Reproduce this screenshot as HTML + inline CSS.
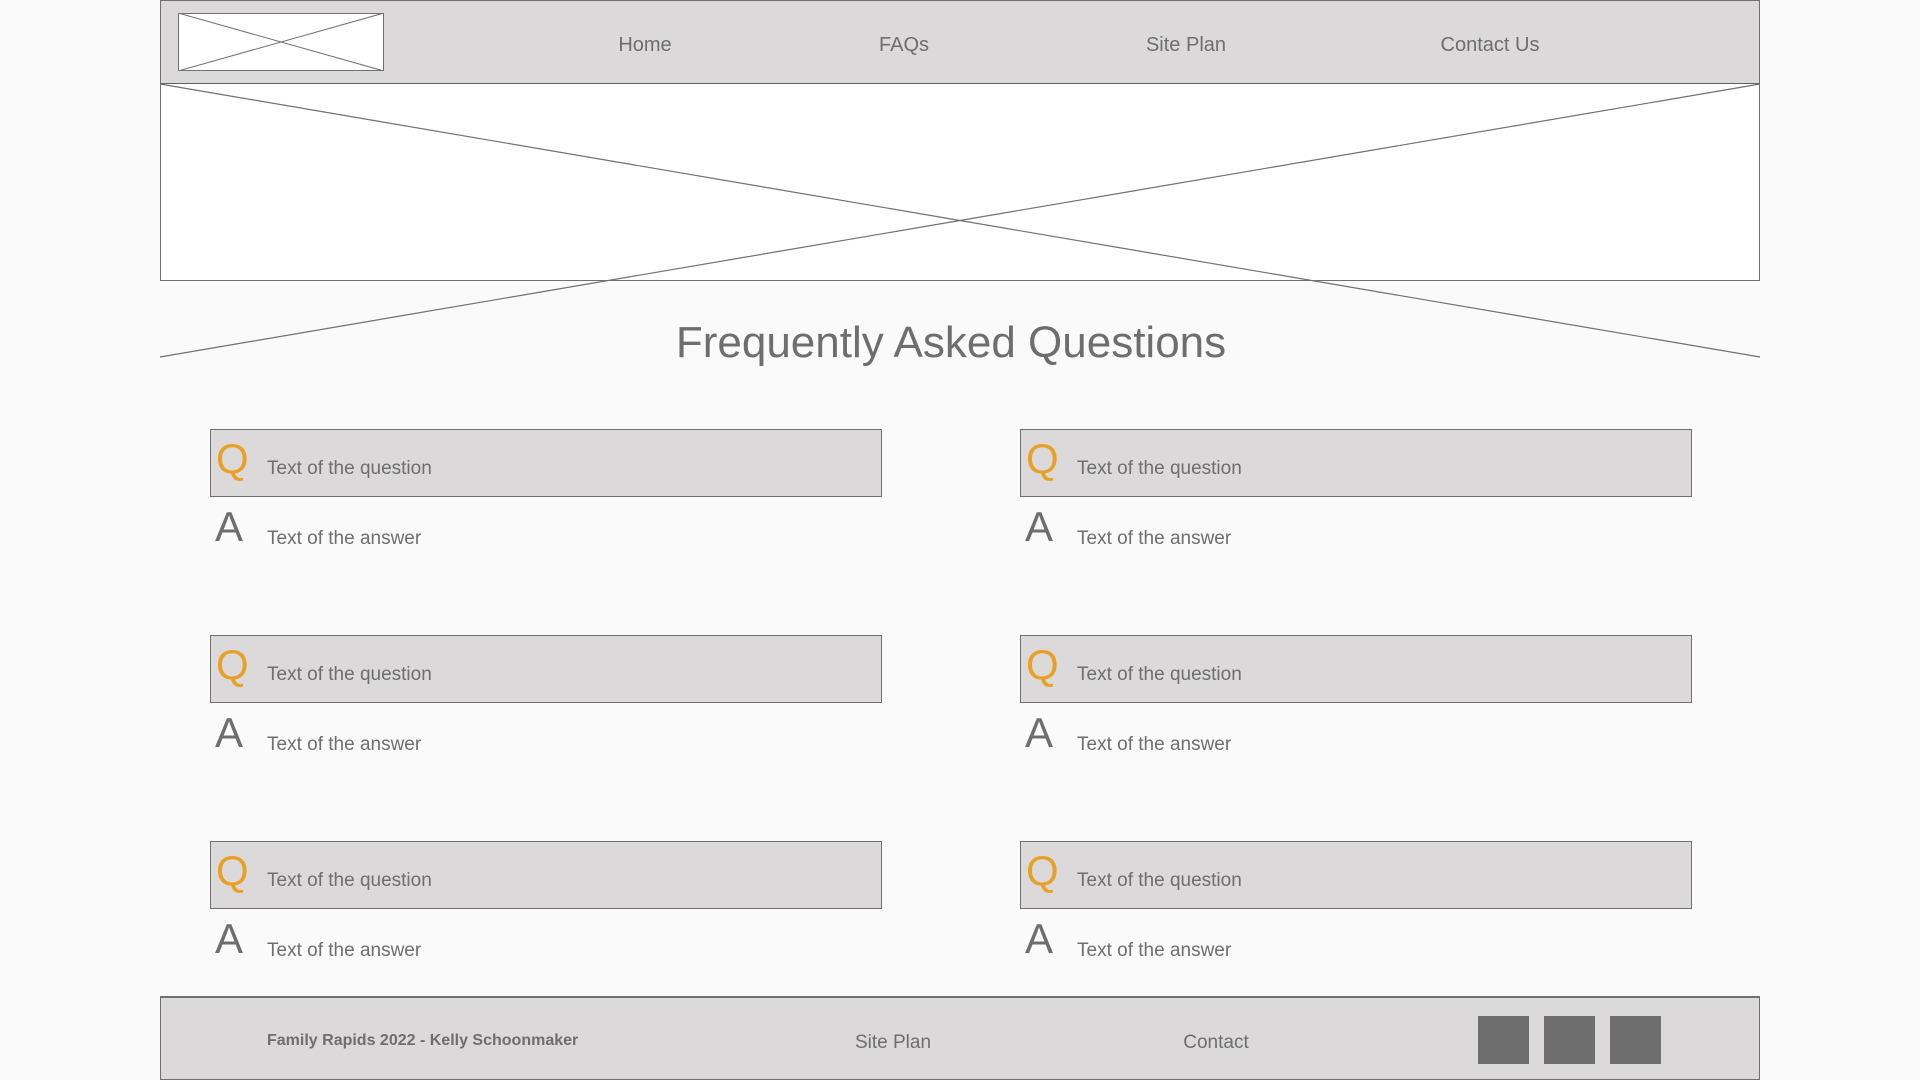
<!DOCTYPE html>
<html><head><style>
*{margin:0;padding:0;box-sizing:border-box}
body{width:1920px;height:1080px;background:#fafafa;position:relative;overflow:hidden;font-family:"Segoe UI","Liberation Sans",sans-serif;color:#6e6e6e}
.abs{position:absolute}
.hdr{left:160px;top:0;width:1600px;height:85px;background:#dbd9da;border:1px solid #707070;border-bottom:2px solid #606060}
.nav{top:34px;font-size:20px;transform:translateX(-50%);white-space:nowrap}
.qb{width:672px;height:68px;background:#dbd9da;border:1px solid #707070}
.q{font-size:42px;color:#e8a025;line-height:1}
.a{font-size:42px;color:#6e6e6e;line-height:1}
.t{font-size:19px}
.ftr{left:160px;top:996px;width:1600px;height:84px;background:#dbd9da;border:1px solid #707070;border-top:2px solid #707070}
.sq{width:51px;height:48px;background:#6e6e6e;top:1016px}
</style></head><body>
<div class="abs hdr"></div>
<svg class="abs" style="left:178px;top:13px" width="206" height="58"><rect x="0.5" y="0.5" width="205" height="57" fill="#fff" stroke="#707070"/><line x1="0" y1="0" x2="206" y2="58" stroke="#707070"/><line x1="206" y1="0" x2="0" y2="58" stroke="#707070"/></svg>
<div class="abs nav" style="left:645px">Home</div>
<div class="abs nav" style="left:904px">FAQs</div>
<div class="abs nav" style="left:1186px">Site Plan</div>
<div class="abs nav" style="left:1490px">Contact Us</div>
<div class="abs" style="left:160px;top:84px;width:1600px;height:197px;background:#fff;border:1px solid #707070;border-top:none"></div>
<svg class="abs" style="left:0;top:0" width="1920" height="400"><line x1="160" y1="84" x2="1760" y2="357" stroke="#707070" stroke-width="1.2"/><line x1="1760" y1="84" x2="160" y2="357" stroke="#707070" stroke-width="1.2"/></svg>
<div class="abs" style="left:0;width:1902px;text-align:center;top:318px;font-size:44px;color:#6e6e6e">Frequently Asked Questions</div>

<div class="abs qb" style="left:210px;top:429px"></div>
<div class="abs q" style="left:216px;top:438px">Q</div>
<div class="abs t" style="left:267px;top:458px">Text of the question</div>
<div class="abs a" style="left:215px;top:506px">A</div>
<div class="abs t" style="left:267px;top:528px">Text of the answer</div>

<div class="abs qb" style="left:1020px;top:429px"></div>
<div class="abs q" style="left:1026px;top:438px">Q</div>
<div class="abs t" style="left:1077px;top:458px">Text of the question</div>
<div class="abs a" style="left:1025px;top:506px">A</div>
<div class="abs t" style="left:1077px;top:528px">Text of the answer</div>

<div class="abs qb" style="left:210px;top:635px"></div>
<div class="abs q" style="left:216px;top:644px">Q</div>
<div class="abs t" style="left:267px;top:664px">Text of the question</div>
<div class="abs a" style="left:215px;top:712px">A</div>
<div class="abs t" style="left:267px;top:734px">Text of the answer</div>

<div class="abs qb" style="left:1020px;top:635px"></div>
<div class="abs q" style="left:1026px;top:644px">Q</div>
<div class="abs t" style="left:1077px;top:664px">Text of the question</div>
<div class="abs a" style="left:1025px;top:712px">A</div>
<div class="abs t" style="left:1077px;top:734px">Text of the answer</div>

<div class="abs qb" style="left:210px;top:841px"></div>
<div class="abs q" style="left:216px;top:850px">Q</div>
<div class="abs t" style="left:267px;top:870px">Text of the question</div>
<div class="abs a" style="left:215px;top:918px">A</div>
<div class="abs t" style="left:267px;top:940px">Text of the answer</div>

<div class="abs qb" style="left:1020px;top:841px"></div>
<div class="abs q" style="left:1026px;top:850px">Q</div>
<div class="abs t" style="left:1077px;top:870px">Text of the question</div>
<div class="abs a" style="left:1025px;top:918px">A</div>
<div class="abs t" style="left:1077px;top:940px">Text of the answer</div>

<div class="abs ftr"></div>
<div class="abs" style="left:267px;top:1032px;font-size:16px;font-weight:bold">Family Rapids 2022 - Kelly Schoonmaker</div>
<div class="abs nav" style="left:893px;top:1032px;font-size:19px">Site Plan</div>
<div class="abs nav" style="left:1216px;top:1032px;font-size:19px">Contact</div>
<div class="abs sq" style="left:1478px"></div>
<div class="abs sq" style="left:1544px"></div>
<div class="abs sq" style="left:1610px"></div>
</body></html>
